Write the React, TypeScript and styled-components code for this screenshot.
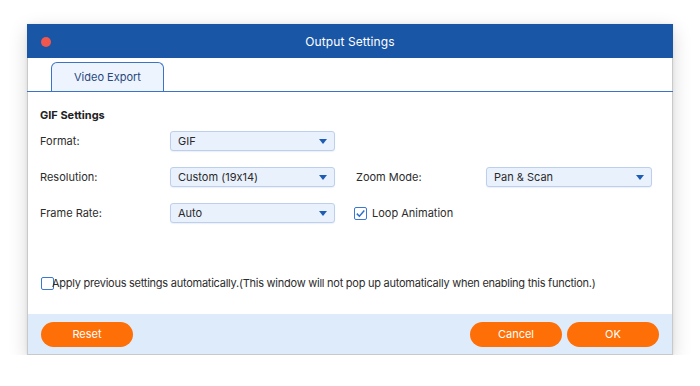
import React, { useState } from 'react';
import styled, { createGlobalStyle } from 'styled-components';

const GlobalStyle = createGlobalStyle`
  html, body {
    margin: 0;
    padding: 0;
    background: #ffffff;
  }
  body {
    font-family: Inter, "Liberation Sans", Arial, sans-serif;
    font-feature-settings: "calt" 0;
    -webkit-font-smoothing: antialiased;
  }
`;

const LEFT_FIELDS = [
  { label: 'Format:', value: 'GIF' },
  { label: 'Resolution:', value: 'Custom (19x14)' },
  { label: 'Frame Rate:', value: 'Auto' },
];

function Select({ value }: { value: string }) {
  return (
    <SelectBox>
      <span>{value}</span>
      <Arrow viewBox="0 0 8 5">
        <path d="M0 0h8L4 5z" fill="#1d5cb4" />
      </Arrow>
    </SelectBox>
  );
}

function Check({ checked }: { checked: boolean }) {
  return (
    <CheckBox>
      {checked && (
        <svg width="11" height="11" viewBox="0 0 11 11">
          <path d="M1.8 5.6l2.6 2.6 4.9-5.6" fill="none" stroke="#2b6fd0" strokeWidth="1.5" />
        </svg>
      )}
    </CheckBox>
  );
}

export default function App() {
  const [loop] = useState(true);
  const [apply] = useState(false);

  return (
    <Page>
      <GlobalStyle />
      <Window>
        <TitleBar>
          <CloseDot />
          <Title>Output Settings</Title>
        </TitleBar>
        <TabStrip>
          <Tab>Video Export</Tab>
        </TabStrip>
        <Content>
          <Heading>GIF Settings</Heading>
          <FormGrid>
            <Label>{LEFT_FIELDS[0].label}</Label>
            <Select value={LEFT_FIELDS[0].value} />
            <span />
            <span />
            <Label>{LEFT_FIELDS[1].label}</Label>
            <Select value={LEFT_FIELDS[1].value} />
            <Label $indent>Zoom Mode:</Label>
            <Select value="Pan & Scan" />
            <Label>{LEFT_FIELDS[2].label}</Label>
            <Select value={LEFT_FIELDS[2].value} />
            <CheckRow>
              <Check checked={loop} />
              <span>Loop Animation</span>
            </CheckRow>
          </FormGrid>
          <ApplyRow>
            <Check checked={apply} />
            <ApplyText>
              Apply previous settings automatically.(This window will not pop up automatically when enabling this
              function.)
            </ApplyText>
          </ApplyRow>
        </Content>
        <Footer>
          <Button>Reset</Button>
          <Spacer />
          <Button>Cancel</Button>
          <Button>OK</Button>
        </Footer>
      </Window>
    </Page>
  );
}

const Page = styled.div`
  padding: 24px 0 0 27px;
`;

const Window = styled.div`
  width: 646px;
  height: 331px;
  display: flex;
  flex-direction: column;
  background: #ffffff;
  border: 1px solid #c9c9c9;
  border-top: none;
  box-sizing: border-box;
  box-shadow: 0 6px 18px rgba(0, 0, 0, 0.16), 0 0 3px rgba(0, 0, 0, 0.08);
`;

const TitleBar = styled.div`
  height: 34px;
  margin: 0 -1px;
  background: #1a56a6;
  display: flex;
  align-items: center;
  justify-content: center;
  position: relative;
`;

const CloseDot = styled.div`
  position: absolute;
  left: 14px;
  top: 13px;
  width: 10px;
  height: 10px;
  border-radius: 50%;
  background: #f1574c;
`;

const Title = styled.div`
  color: #ffffff;
  font-size: 12px;
  letter-spacing: 0.1px;
`;

const TabStrip = styled.div`
  height: 34px;
  box-sizing: border-box;
  display: flex;
  align-items: flex-end;
  padding-left: 24px;
  border-bottom: 1px solid #3b74c6;
  margin: 0 -1px;
`;

const Tab = styled.div`
  width: 113px;
  height: 29px;
  box-sizing: border-box;
  border: 1px solid #3b74c6;
  border-bottom: none;
  border-radius: 6px 6px 0 0;
  background: #eef4fd;
  color: #27487e;
  font-size: 11px;
  display: flex;
  align-items: center;
  justify-content: center;
`;

const Content = styled.div`
  flex: 1;
  display: flex;
  flex-direction: column;
  padding: 15px 12px 0;
  color: #2a2a2a;
  font-size: 11px;
`;

const Heading = styled.div`
  font-weight: 700;
  line-height: 16px;
  font-size: 11px;
  color: #222222;
`;

const FormGrid = styled.div`
  margin-top: 8px;
  display: grid;
  grid-template-columns: 130px 165px 151px 166px;
  row-gap: 16px;
  grid-auto-rows: 20px;
  align-items: center;
`;

const Label = styled.div<{ $indent?: boolean }>`
  color: #2c2c2c;
  padding-left: ${(p) => (p.$indent ? '21px' : '0')};
`;

const SelectBox = styled.div`
  height: 20px;
  box-sizing: border-box;
  border: 1px solid #bcd0ee;
  border-radius: 3px;
  background: #e9f1fd;
  display: flex;
  align-items: center;
  justify-content: space-between;
  padding: 0 7px 0 7px;
  color: #2a2a2a;
  box-shadow: 0 1px 1px rgba(30, 80, 160, 0.08);
`;

const Arrow = styled.svg`
  width: 8px;
  height: 5px;
`;

const CheckBox = styled.div`
  width: 13px;
  height: 13px;
  box-sizing: border-box;
  border: 1px solid #3a78d2;
  border-radius: 2px;
  background: #ffffff;
  display: flex;
  align-items: center;
  justify-content: center;
  flex-shrink: 0;
`;

const CheckRow = styled.div`
  display: flex;
  align-items: center;
  gap: 5px;
  margin-left: 19px;
  grid-column: span 2;
  color: #2c2c2c;
`;

const ApplyRow = styled.div`
  margin-top: auto;
  margin-bottom: 24px;
  margin-left: 1px;
  display: flex;
  align-items: center;
`;

const ApplyText = styled.span`
  margin-left: -2px;
  color: #2c2c2c;
  letter-spacing: -0.25px;
  white-space: nowrap;
`;

const Footer = styled.div`
  height: 40px;
  background: #deebfb;
  display: flex;
  align-items: center;
  gap: 5px;
  padding: 0 13px 0 13px;
`;

const Spacer = styled.div`
  flex: 1;
`;

const Button = styled.button`
  width: 92px;
  height: 25px;
  border: none;
  border-radius: 13px;
  background: #fe6f07;
  color: #ffffff;
  font-family: Inter, "Liberation Sans", Arial, sans-serif;
  font-size: 11px;
  padding: 0;
  cursor: pointer;
`;
